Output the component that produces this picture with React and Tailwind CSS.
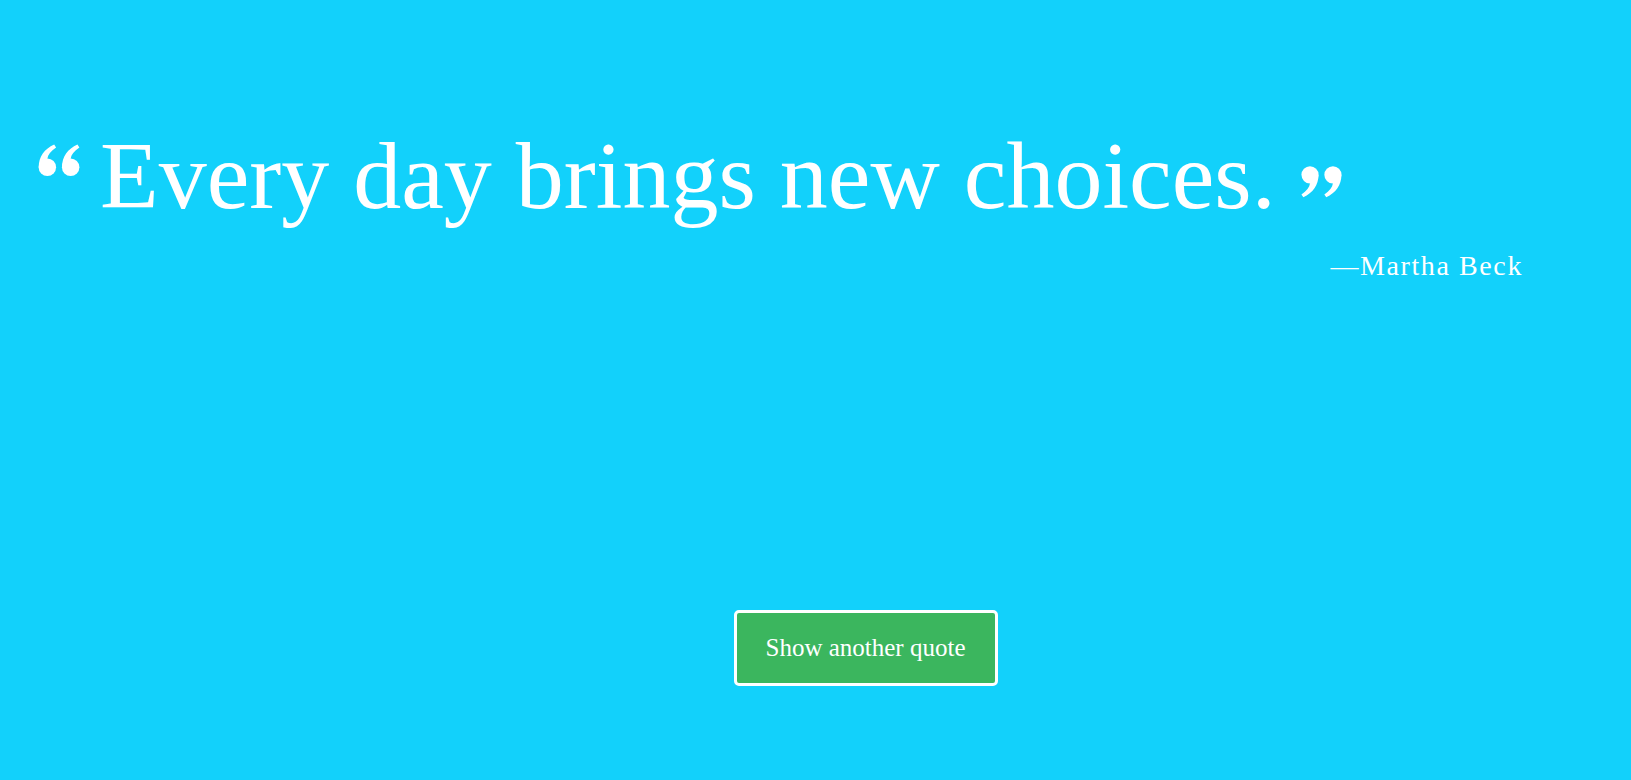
import React from "react";

const G = (dx) => (
  <g transform={`translate(${dx} 0)`}>
    <circle cx="9.5" cy="24" r="9" />
    <path d="M0.6 24 C0.6 13 6.5 5 16.5 0.5 L18.5 3.5 C13 7 10 11 9.5 15.2 Z" />
  </g>
);

function QuoteOpen({ className }) {
  return (
    <svg className={className} viewBox="0 0 44 34" fill="white">
      {G(0)}
      {G(24)}
    </svg>
  );
}

function QuoteClose({ className }) {
  return (
    <svg className={className} viewBox="0 0 44 34" fill="white">
      <g transform="rotate(180 22 17)">
        {G(0)}
        {G(24)}
      </g>
    </svg>
  );
}

export default function App() {
  return (
    <div
      className="w-full h-[780px] bg-[#12d1fb] text-white flex flex-col"
      style={{ fontFamily: '"Liberation Serif", "DejaVu Serif", serif' }}
    >
      <div className="pt-[144px] pl-[38px] flex items-start">
        <QuoteOpen className="w-[43px] h-[33px] shrink-0" />
        <h1 className="ml-[19px] mt-[-28px] text-[96px] leading-[120px] font-normal whitespace-nowrap">
          Every day brings new choices.
        </h1>
        <QuoteClose className="ml-[24px] mt-[21px] w-[42px] h-[33px] shrink-0" />
      </div>
      <div className="flex justify-end pr-[108px] mt-[12px]">
        <p className="text-[28px] leading-[36px] tracking-[1.6px]">—Martha Beck</p>
      </div>
      <div className="flex justify-center pl-[100px] mt-[326px]">
        <button className="w-[264px] h-[76px] bg-[#3bb65e] border-[3px] border-white rounded-[5px] text-[25px] text-white">
          Show another quote
        </button>
      </div>
    </div>
  );
}
